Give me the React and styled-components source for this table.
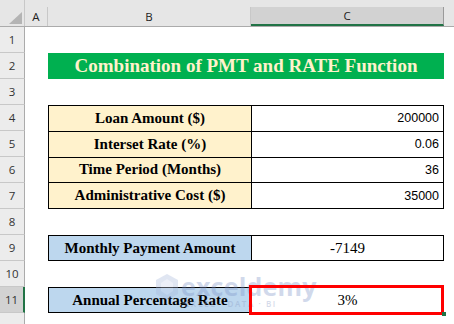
import React from "react";
import styled, { createGlobalStyle, css } from "styled-components";

const Global = createGlobalStyle`
  html, body { margin: 0; padding: 0; background: #fff; }
  body { width: 454px; height: 324px; overflow: hidden; }
`;

const Sheet = styled.div`
  position: relative;
  display: grid;
  grid-template-columns: 25px 23px 203px 193px 1fr;
  grid-template-rows: 27px repeat(12, 26px);
  width: 454px;
  height: 324px;
  overflow: hidden;
  background: #fff;
`;

const HeadStrip = styled.div`
  grid-column: 1 / -1;
  grid-row: 1;
  background: #e6e6e6;
  border-bottom: 1px solid #ababab;
  box-sizing: border-box;
  display: grid;
  grid-template-columns: 25px 23px 203px 193px 1fr;
  align-items: end;
`;

const Corner = styled.div`
  height: 26px;
  position: relative;
  border-right: 1px solid #c8c8c8;
  box-sizing: border-box;
  svg { position: absolute; left: 9px; top: 12px; }
`;

const ColHead = styled.div`
  height: 19px;
  box-sizing: border-box;
  display: flex;
  align-items: center;
  justify-content: center;
  font-family: "Open Sans", "Liberation Sans", sans-serif;
  font-size: 11.5px;
  color: #222;
  border-right: 1px solid ${p => (p.$last ? "transparent" : "#c8c8c8")};
  background: ${p => (p.$sel ? "#d2d2d2" : "#e6e6e6")};
  ${p => p.$sel && css`border-bottom: 2px solid #217346; border-right-color: #9a9a9a;`}
`;

const RowHead = styled.div`
  grid-column: 1;
  box-sizing: border-box;
  display: flex;
  align-items: center;
  justify-content: center;
  font-family: "Open Sans", "Liberation Sans", sans-serif;
  font-size: 11.5px;
  color: #333;
  background: ${p => (p.$sel ? "#d2d2d2" : "#ececec")};
  border-bottom: 1px solid #c8c8c8;
  border-right: ${p => (p.$sel ? "2px solid #217346" : "1px solid #ababab")};
`;

const Title = styled.div`
  grid-column: 3 / 5;
  grid-row: 3;
  background: #00b050;
  color: #fff2cc;
  font-family: "Liberation Serif", "Times New Roman", serif;
  font-weight: bold;
  font-size: 19px;
  display: flex;
  align-items: center;
  justify-content: center;
  padding-bottom: 1px;
`;

const Table = styled.div`
  grid-column: 3 / 5;
  grid-row: ${p => p.$rows};
  display: grid;
  grid-template-columns: 203px 1fr;
  grid-auto-rows: 1fr;
  border-top: 1px solid #000;
  border-left: 1px solid #000;
  box-sizing: border-box;
  height: ${p => p.$h}px;
`;

const Label = styled.div`
  background: ${p => (p.$blue ? "#bdd7ee" : "#fff2cc")};
  border-right: 1px solid #000;
  border-bottom: 1px solid #000;
  display: flex;
  align-items: center;
  justify-content: center;
  font-family: "Liberation Serif", "Times New Roman", serif;
  font-weight: bold;
  font-size: 15px;
  color: #000;
`;

const Value = styled.div`
  background: #fff;
  border-right: 1px solid #000;
  border-bottom: 1px solid #000;
  display: flex;
  align-items: center;
  justify-content: ${p => (p.$center ? "center" : "flex-end")};
  padding-right: ${p => (p.$center ? 0 : 4)}px;
  font-family: ${p => (p.$serif ? `"Liberation Serif", "Times New Roman", serif` : `"Liberation Sans", Arial, sans-serif`)};
  font-size: ${p => (p.$serif ? 15 : 12.5)}px;
  color: #000;
`;

const Highlight = styled.div`
  position: absolute;
  left: 249px;
  top: 285px;
  width: 195px;
  height: 30px;
  box-sizing: border-box;
  border: 3px solid #ff0000;
  pointer-events: none;
`;

const Watermark = styled.div`
  position: absolute;
  left: 156px;
  top: 274px;
  display: flex;
  align-items: flex-start;
  gap: 3px;
  opacity: 0.35;
  pointer-events: none;
`;

const WmText = styled.div`
  display: flex;
  flex-direction: column;
  font-family: "Open Sans", "Liberation Sans", sans-serif;
  color: #7d93c7;
  line-height: 1;
`;

const WmBig = styled.span`
  font-size: 25px;
  font-weight: 700;
  letter-spacing: 0.2px;
`;

const WmSmall = styled.span`
  font-size: 8px;
  font-weight: 600;
  letter-spacing: 1.6px;
  margin-top: 1px;
  padding-left: 4px;
  color: #8a9bc4;
`;

const SelCorner = styled.div`
  position: absolute;
  left: 442px;
  top: 312px;
  width: 4px;
  height: 4px;
  background: #217346;
`;

const rows = [1, 2, 3, 4, 5, 6, 7, 8, 9, 10, 11, 12];

export default function App() {
  return (
    <>
      <Global />
      <Sheet>
        <HeadStrip>
          <Corner>
            <svg width="13" height="12" viewBox="0 0 13 12">
              <polygon points="13,0 13,12 0,12" fill="#b4b4b4" />
            </svg>
          </Corner>
          <ColHead>A</ColHead>
          <ColHead>B</ColHead>
          <ColHead $sel>C</ColHead>
          <ColHead $last />
        </HeadStrip>
        {rows.map(r => (
          <RowHead key={r} $sel={r === 11} style={{ gridRow: r + 1 }}>
            {r < 12 ? r : null}
          </RowHead>
        ))}
        <Title>Combination of PMT and RATE Function</Title>
        <Table $rows="5 / 9" $h={104}>
          <Label>Loan Amount ($)</Label>
          <Value>200000</Value>
          <Label>Interset Rate (%)</Label>
          <Value>0.06</Value>
          <Label>Time Period (Months)</Label>
          <Value>36</Value>
          <Label>Administrative Cost ($)</Label>
          <Value>35000</Value>
        </Table>
        <Table $rows="10" $h={26}>
          <Label $blue>Monthly Payment Amount</Label>
          <Value $center $serif>-7149</Value>
        </Table>
        <Table $rows="12" $h={26}>
          <Label $blue>Annual Percentage Rate</Label>
          <Value $center $serif>3%</Value>
        </Table>
        <Watermark>
          <svg width="22" height="26" viewBox="0 0 22 26">
            <polygon points="11,0 22,6 22,20 11,26 0,20 0,6" fill="#a9b8dc" />
            <polygon points="11,5 17,9 17,17 11,21 5,17 5,9" fill="#c9d3ec" />
          </svg>
          <WmText>
            <WmBig>exceldemy</WmBig>
            <WmSmall>EXCEL · DATA · BI</WmSmall>
          </WmText>
        </Watermark>
        <Highlight />
        <SelCorner />
      </Sheet>
    </>
  );
}
